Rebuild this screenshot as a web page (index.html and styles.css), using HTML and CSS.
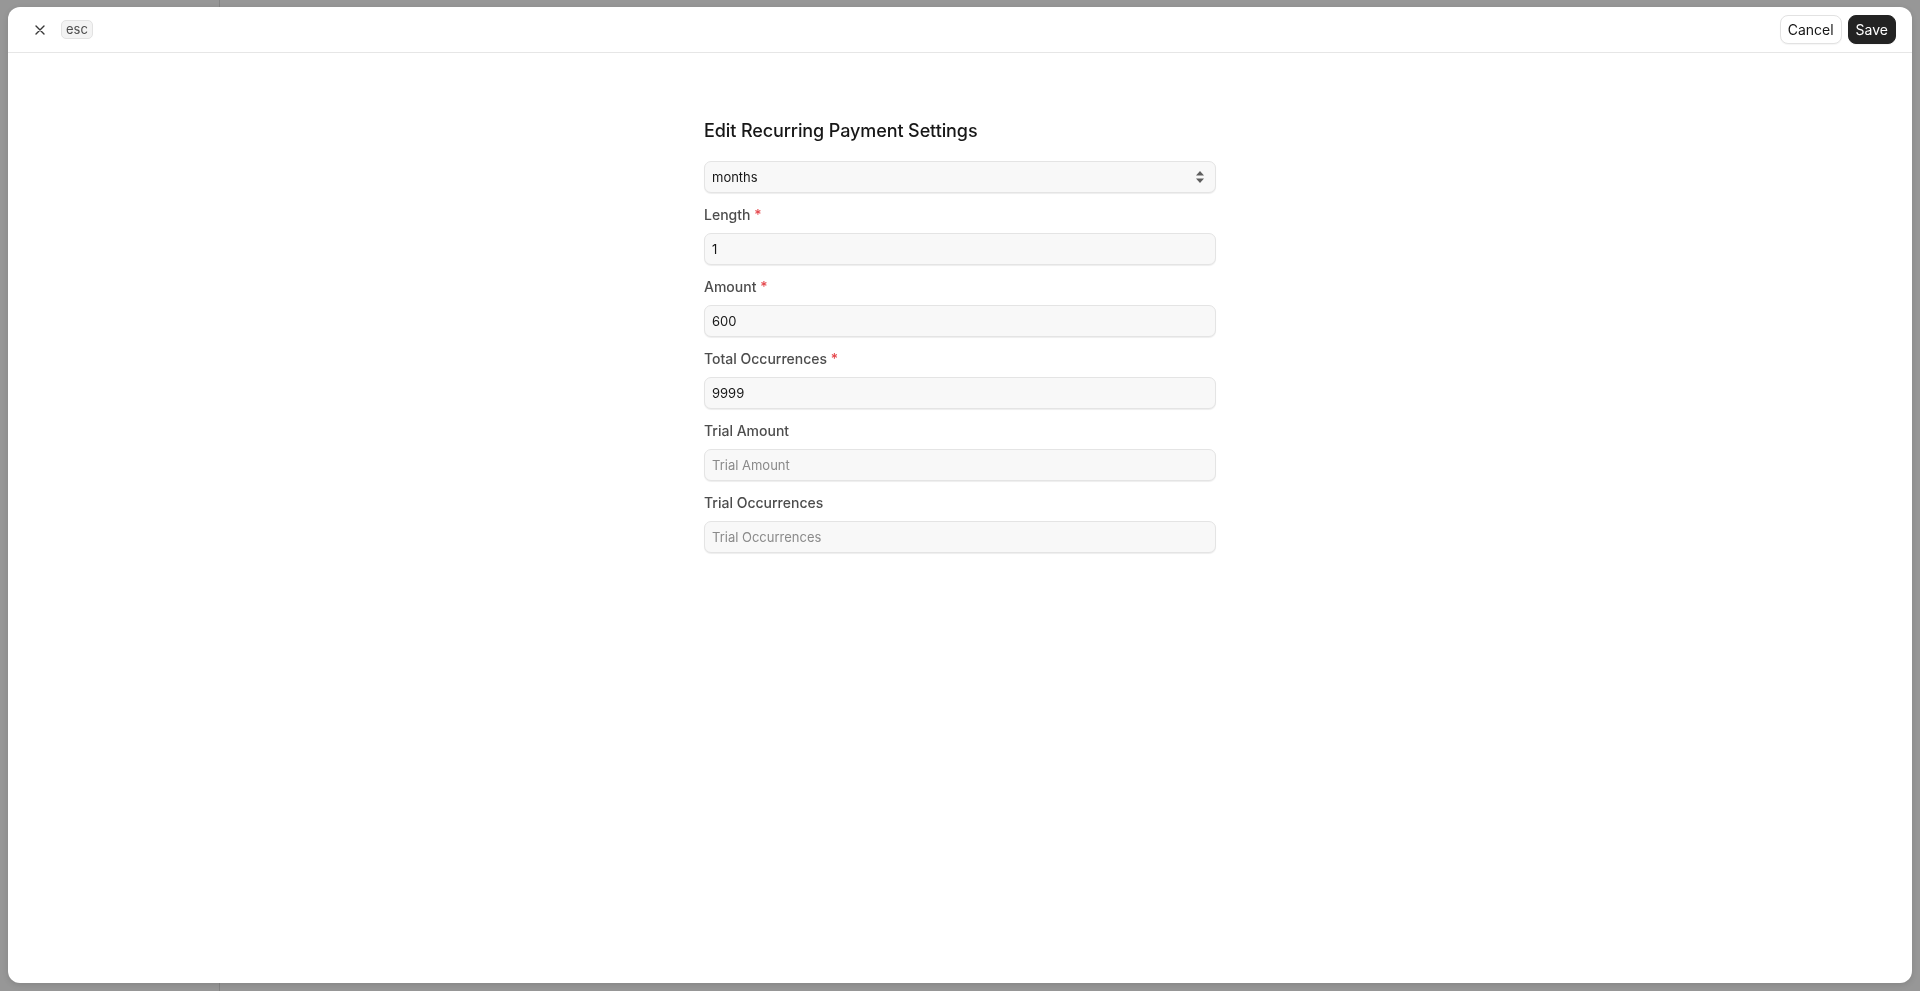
FILE: index.html
```html
<!DOCTYPE html>
<html>
  <head>
    <meta charset="UTF-8" />
    <title>Edit Recurring Payment Settings</title>
    <link rel="stylesheet" href="styles.css">
  </head>
  <body>
    <!-- page behind the dialog, dimmed -->
    <div class="backdrop">
      <div class="sidebar"></div>
    </div>

    <div class="dialog">
      <div class="dialog-header">
        <button class="close-btn" title="Close">
          <svg width="16" height="16" viewBox="0 0 16 16" fill="none" stroke="#383838" stroke-width="1.4" stroke-linecap="round">
            <path d="M4 4 L12 12 M12 4 L4 12" />
          </svg>
        </button>
        <span class="kbd">esc</span>
        <div class="header-actions">
          <button class="btn">Cancel</button>
          <button class="btn btn-dark">Save</button>
        </div>
      </div>

      <div class="dialog-body">
        <form class="form">
          <h2 class="form-title">Edit Recurring Payment Settings</h2>

          <div class="select-wrap">
            <select class="control">
              <option>months</option>
              <option>days</option>
              <option>weeks</option>
              <option>years</option>
            </select>
            <svg class="select-arrows" width="10" height="14" viewBox="0 0 10 14">
              <path d="M5 1 L9 5.5 L1 5.5 Z" fill="#5e5e5e" />
              <path d="M5 13 L9 8.5 L1 8.5 Z" fill="#5e5e5e" />
            </svg>
          </div>

          <div class="field">
            <label>Length <span class="req">*</span></label>
            <input class="control" type="text" value="1">
          </div>

          <div class="field">
            <label>Amount <span class="req">*</span></label>
            <input class="control" type="text" value="600">
          </div>

          <div class="field">
            <label>Total Occurrences <span class="req">*</span></label>
            <input class="control" type="text" value="9999">
          </div>

          <div class="field">
            <label>Trial Amount</label>
            <input class="control" type="text" placeholder="Trial Amount">
          </div>

          <div class="field">
            <label>Trial Occurrences</label>
            <input class="control" type="text" placeholder="Trial Occurrences">
          </div>
        </form>
      </div>
    </div>
  </body>
</html>
```

FILE: styles.css
```css
body {
  margin: 0;
  font-family: Inter, "Noto Sans", sans-serif;
  color: #171717;
  background-color: #979797;
  height: 100vh;
  overflow: hidden;
}

/* dimmed app behind the dialog */
.backdrop {
  height: 100%;
}

.sidebar {
  width: 219px;
  height: 100%;
  border-right: 1px solid #858585;
}

/* the dialog itself */
.dialog {
  position: fixed;
  top: 7px;
  left: 8px;
  right: 8px;
  bottom: 8px;
  background-color: #fff;
  border-radius: 12px;
  box-shadow: 0 2px 6px rgba(0, 0, 0, 0.12);
  display: flex;
  flex-direction: column;
}

.dialog-header {
  display: flex;
  align-items: center;
  height: 45px;
  padding: 0 16px;
  border-bottom: 1px solid #e6e6e6;
}

.close-btn {
  width: 28px;
  height: 28px;
  display: flex;
  align-items: center;
  justify-content: center;
  border: none;
  background: none;
  padding: 0;
  margin-left: 2px;
  margin-top: 1px;
  cursor: pointer;
}

.kbd {
  margin-left: 7px;
  height: 17px;
  line-height: 17px;
  padding: 0 4px;
  font-size: 13px;
  color: #4d4d4d;
  background-color: #f3f3f3;
  border: 1px solid #e2e2e2;
  border-radius: 5px;
}

.header-actions {
  margin-left: auto;
  display: flex;
  gap: 6px;
}

.btn {
  height: 29px;
  padding: 0 7px;
  font-family: inherit;
  font-size: 14px;
  color: #171717;
  background-color: #fff;
  border: 1px solid #e2e2e2;
  border-radius: 8px;
  box-shadow: 0 1px 1px rgba(0, 0, 0, 0.04);
  cursor: pointer;
}

.btn-dark {
  color: #fff;
  background-color: #232323;
  border-color: #232323;
}

/* form */
.dialog-body {
  flex: 1;
  padding-top: 64px;
}

.form {
  width: 512px;
  margin: 0 auto;
}

.form-title {
  margin: 0 0 16px;
  font-size: 18px;
  line-height: 28px;
  font-weight: 500;
  letter-spacing: -0.1px;
  color: #171717;
}

.select-wrap {
  position: relative;
}

.select-arrows {
  position: absolute;
  right: 11px;
  top: 9px;
  pointer-events: none;
}

.control {
  display: block;
  width: 100%;
  box-sizing: border-box;
  height: 32px;
  padding: 0 7px;
  font-family: inherit;
  font-size: 13px;
  color: #171717;
  background-color: #f8f8f8;
  border: 1px solid #e4e4e4;
  border-radius: 7px;
  box-shadow: 0 1px 1px rgba(0, 0, 0, 0.07);
  outline: none;
}

select.control {
  appearance: none;
  -webkit-appearance: none;
}

.control::placeholder {
  color: #8a8a8a;
}

.field {
  margin-top: 12px;
}

.field label {
  display: block;
  margin-bottom: 8px;
  font-size: 14px;
  line-height: 20px;
  font-weight: 500;
  color: #4d4d4d;
}

.req {
  color: #e5484d;
}
```
